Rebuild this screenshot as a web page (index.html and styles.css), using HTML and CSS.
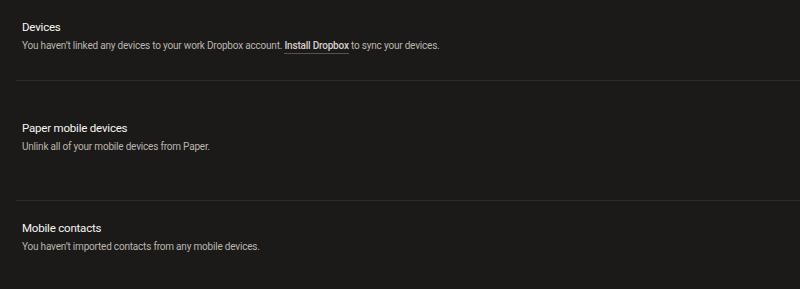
FILE: index.html
```html
<!DOCTYPE html>
<html lang="en">
<head>
<meta charset="UTF-8">
<meta name="viewport" content="width=device-width, initial-scale=1.0">
<title>Devices</title>
<link rel="stylesheet" href="styles.css">
</head>
<body>

<div class="page">
  <div class="row">
    <div class="row-text">
      <h2>Devices</h2>
      <p>You haven’t linked any devices to your work Dropbox account. <a href="#">Install Dropbox</a> to sync your devices.</p>
    </div>
  </div>

  <div class="row row-tall">
    <div class="row-text">
      <h2>Paper mobile devices</h2>
      <p>Unlink all of your mobile devices from Paper.</p>
    </div>
  </div>

  <div class="row row-last">
    <div class="row-text">
      <h2>Mobile contacts</h2>
      <p>You haven’t imported contacts from any mobile devices.</p>
    </div>
  </div>
</div>

</body>
</html>
```

FILE: styles.css
```css
body {
  margin: 0;
  background: #1b1a19;
  color: #f7f5f2;
  font-family: Roboto, "Liberation Sans", Arial, sans-serif;
}

.page {
  padding-left: 16px;
}

.row {
  height: 81px;
  border-bottom: 1px solid #2e2d2c;
  box-sizing: border-box;
  padding: 19px 0 0 6px;
}

.row-tall {
  height: 120px;
  padding-top: 39px;
}

.row-last {
  border-bottom: none;
  padding-top: 19px;
}

h2 {
  margin: 0 0 4px;
  font-size: 11.5px;
  font-weight: normal;
  line-height: 16px;
  letter-spacing: -0.2px;
}

p {
  margin: 0;
  font-size: 10px;
  line-height: 14px;
  letter-spacing: -0.2px;
  color: #bbb5ae;
}

a {
  color: #d6d1cb;
  font-weight: 500;
  text-decoration: none;
  padding-bottom: 2px;
  border-bottom: 1px solid #55524f;
}
```
